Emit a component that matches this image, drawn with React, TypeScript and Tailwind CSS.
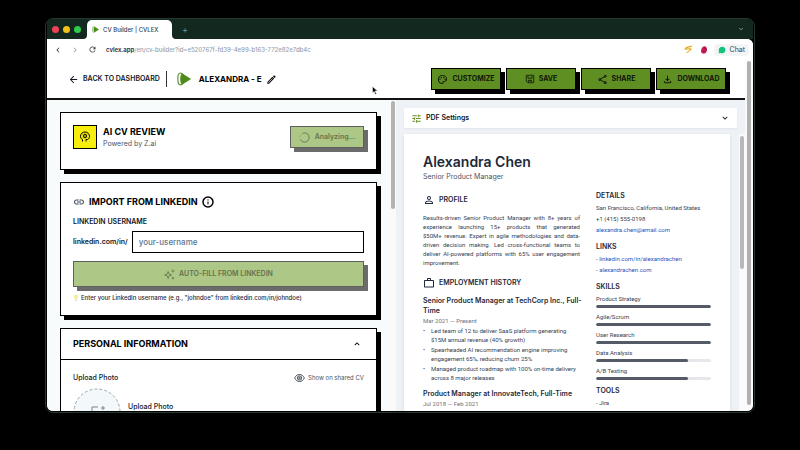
/**
 * CvBuilderView - CV editor shown inside a browser window
 * Left: form cards, right: live PDF preview
 */

import type { ReactNode } from 'react';
import {
    MdOutlinePalette,
    MdOutlineShare,
    MdOutlineFileDownload,
    MdLink,
    MdTune,
    MdPersonOutline,
    MdWorkOutline,
    MdOutlineEdit,
    MdArrowBack,
    MdKeyboardArrowDown,
    MdKeyboardArrowUp,
    MdRefresh,
    MdChevronLeft,
    MdChevronRight,
} from 'react-icons/md';

const SUMMARY_LINES = [
    'Results-driven Senior Product Manager with 8+ years of',
    'experience launching 15+ products that generated',
    '$50M+ revenue. Expert in agile methodologies and data-',
    'driven decision making. Led cross-functional teams to',
    'deliver AI-powered platforms with 65% user engagement',
    'improvement.',
];

const SKILLS = [
    { name: 'Product Strategy', level: 100 },
    { name: 'Agile/Scrum', level: 100 },
    { name: 'User Research', level: 100 },
    { name: 'Data Analysis', level: 80 },
    { name: 'A/B Testing', level: 80 },
];

const ACHIEVEMENTS = [
    'Led team of 12 to deliver SaaS platform generating $15M annual revenue (40% growth)',
    'Spearheaded AI recommendation engine improving engagement 65%, reducing churn 25%',
    'Managed product roadmap with 100% on-time delivery across 8 major releases',
];

/* ── Icons ──────────────────────────────────────────────────────────── */
const Logo = ({ className }: { className: string }) => (
    <svg viewBox="0 0 26 26" className={className} aria-hidden="true">
        <ellipse cx="6.5" cy="13" rx="5" ry="11" fill="#fff" stroke="#4f8a1c" strokeWidth="2" />
        <path d="M9 3 L25 13 L9 23 C6 18 6 8 9 3 Z" fill="#4f8a1c" stroke="#4f8a1c" strokeWidth="1.5" strokeLinejoin="round" />
    </svg>
);

const MindIcon = ({ className }: { className: string }) => (
    <svg viewBox="0 0 24 24" className={className} fill="none" stroke="currentColor" strokeWidth="2" aria-hidden="true">
        <path d="M7 21v-4C4 15.500 3 13 3 10.500a9 8.500 0 0 1 18 0c0 3-1 5-4 6.500h-3v4" />
        <circle cx="12" cy="10" r="3" />
        <path d="M12 5v2M12 13v2M7.500 7.500l2 1M16.500 7.500l-2 1M7.500 12.500l2-1M16.500 12.500l-2-1" strokeWidth="1.500" />
    </svg>
);

const SaveIcon = ({ className }: { className: string }) => (
    <svg viewBox="0 0 24 24" className={className} fill="none" stroke="currentColor" strokeWidth="2" aria-hidden="true">
        <path d="M4 3h16a1 1 0 0 1 1 1v16a1 1 0 0 1-1 1H7l-4-4V4a1 1 0 0 1 1-1z" />
        <path d="M7 4v6h10V4M8 20v-5h8v5" />
        <path d="M12 15v4" />
    </svg>
);

const SparkleIcon = ({ className }: { className: string }) => (
    <svg viewBox="0 0 24 24" className={className} fill="none" stroke="currentColor" strokeWidth="1.8" aria-hidden="true">
        <path d="M9 5.5 L11 11 L16.5 13 L11 15 L9 20.500 L7 15 L1.500 13 L7 11 Z" strokeLinejoin="round" />
        <path d="M19.500 1.500v6M16.500 4.500h6M19.500 17.500v5M17 20h5" />
    </svg>
);

const EyeIcon = ({ className }: { className: string }) => (
    <svg viewBox="0 0 24 18" className={className} fill="none" stroke="currentColor" strokeWidth="1.8" aria-hidden="true">
        <path d="M1 9C4 3.500 7.500 1 12 1s8 2.500 11 8c-3 5.500-6.500 8-11 8S4 14.500 1 9z" />
        <circle cx="12" cy="9" r="4.800" />
        <circle cx="12" cy="9" r="1.800" />
    </svg>
);

const BulbIcon = ({ className }: { className: string }) => (
    <svg viewBox="0 0 12 16" className={className} aria-hidden="true">
        <path d="M6 1a5 5 0 0 0-3 9v2h6v-2a5 5 0 0 0-3-9z" fill="#f3ee9c" />
        <path d="M4 13h4v2H4z" fill="#b9bcae" />
    </svg>
);

/* ── Shared pieces ──────────────────────────────────────────────────── */
const ActionButton = ({ icon, label }: { icon: ReactNode; label: string }) => (
    <button
        type="button"
        className="flex h-[22px] w-[70px] items-center justify-center gap-1 border border-black bg-[#5f8f22] text-[7px] font-bold text-[#10180a] shadow-[4px_4px_0_#000]"
    >
        {icon}
        {label}
    </button>
);

const Card = ({ children, className = '' }: { children: ReactNode; className?: string }) => (
    <section className={`shrink-0 border border-black bg-white shadow-[4px_4px_0_#000] ${className}`}>{children}</section>
);

const PaperHeading = ({ icon, children }: { icon: ReactNode; children: ReactNode }) => (
    <h3 className="flex items-center gap-1 font-['Inter',sans-serif] text-[7px] leading-3 font-semibold text-gray-800">
        {icon}
        {children}
    </h3>
);

const SideHeading = ({ children, className = '' }: { children: ReactNode; className?: string }) => (
    <h3 className={`font-['Inter',sans-serif] text-[7px] leading-[13px] font-semibold text-gray-800 ${className}`}>
        {children}
    </h3>
);

const JobTitle = ({ children }: { children: ReactNode }) => (
    <h4 className="mt-[7px] font-['Inter',sans-serif] text-[7px] leading-[10px] font-semibold text-gray-800">{children}</h4>
);

/* ── Browser chrome ─────────────────────────────────────────────────── */
const TabStrip = () => (
    <div className="flex h-5 shrink-0 items-end bg-[#13291f] pr-2">
        <div className="flex items-center gap-1 self-center pl-[5px]">
            <span className="size-[7px] rounded-full bg-[#ee4056]" />
            <span className="size-[7px] rounded-full bg-[#f2c218]" />
            <span className="size-[7px] rounded-full bg-[#2fcb4a]" />
        </div>
        <span className="ml-0.5 size-1 bg-white">
            <span className="block size-full rounded-br bg-[#13291f]" />
        </span>
        <div className="flex h-[19px] w-[85px] items-center gap-1 rounded-t-[5px] bg-white pl-[5px] text-[6px] font-medium text-gray-700">
            <Logo className="size-[7px]" />
            CV Builder | CVLEX
        </div>
        <span className="size-1 bg-white">
            <span className="block size-full rounded-bl bg-[#13291f]" />
        </span>
        <button type="button" aria-label="New tab" className="ml-1.5 self-center text-[9px] leading-none text-[#7e938a]">+</button>
        <MdKeyboardArrowDown className="ml-auto size-2 self-center text-[#8fa39a]" />
    </div>
);

const Toolbar = () => (
    <div className="flex h-[21px] shrink-0 items-center bg-white pr-1 pl-1.5 text-[#3d3d3d]">
        <button type="button" aria-label="Back"><MdChevronLeft className="block size-[10px]" /></button>
        <button type="button" aria-label="Forward" className="ml-[7px] text-gray-400"><MdChevronRight className="block size-[10px]" /></button>
        <button type="button" aria-label="Reload" className="ml-[8px]"><MdRefresh className="block size-[9px]" /></button>
        <p className="ml-[9px] text-[6px] font-medium text-gray-400">
            <span className="font-semibold text-gray-800">cvlex.app</span>/en/cv-builder?id=e520767f-fd39-4e99-b163-772e82e7db4c
        </p>
        <svg viewBox="0 0 24 24" className="ml-auto size-[9px]" fill="none" stroke="#e5ac22" strokeWidth="3" aria-hidden="true">
            <path d="M21 3 6 7l-3 4 16-1-4 5-8 6" strokeLinejoin="round" />
        </svg>
        <svg viewBox="0 0 24 24" className="ml-[7px] size-2" aria-hidden="true">
            <path d="M13 1c6 0 9 5 8 12-1 6-4 10-9 10S2 20 3 14 7 1 13 1z" fill="#c9205c" />
            <path d="M11 7c4-2 7 1 6 5M8 12c1 4 5 5 8 3" fill="none" stroke="#7c1238" strokeWidth="2" />
        </svg>
        <button type="button" className="ml-1.5 flex h-3 items-center gap-1 rounded-sm bg-gray-100 px-1 text-[7px] leading-3 text-gray-700">
            <svg viewBox="0 0 24 24" className="size-2" aria-hidden="true">
                <path d="M12 2a10 10 0 1 1-4 19l-6 1 1-6A10 10 0 0 1 12 2z" fill="#12c37d" />
            </svg>
            Chat
        </button>
    </div>
);

/* ── Page header ────────────────────────────────────────────────────── */
const PageHeader = () => (
    <header className="flex h-10 shrink-0 items-center justify-between border-b-2 border-[#111] bg-white pr-[19px] pl-[21px]">
        <div className="flex items-center">
            <a href="#dashboard" className="flex items-center gap-1 text-[7px] font-semibold text-gray-900">
                <MdArrowBack className="size-[11px]" />
                BACK TO DASHBOARD
            </a>
            <span className="mr-2.5 ml-1.5 h-4 w-px bg-[#333]" />
            <Logo className="size-[14px]" />
            <h1 className="ml-2 text-[8px] font-bold text-black">ALEXANDRA - E</h1>
            <button type="button" aria-label="Rename" className="ml-1"><MdOutlineEdit className="size-[11px]" /></button>
        </div>
        <div className="flex gap-[5px]">
            <ActionButton icon={<MdOutlinePalette className="size-[11px]" />} label="CUSTOMIZE" />
            <ActionButton icon={<SaveIcon className="size-[10px]" />} label="SAVE" />
            <ActionButton icon={<MdOutlineShare className="size-[11px]" />} label="SHARE" />
            <ActionButton icon={<MdOutlineFileDownload className="size-[11px]" />} label="DOWNLOAD" />
        </div>
    </header>
);

/* ── Form column ────────────────────────────────────────────────────── */
const ReviewCard = () => (
    <Card className="flex items-start justify-between px-3 pt-3 pb-5">
        <div className="flex gap-1.5">
            <span className="flex size-6 items-center justify-center border border-black bg-[#f7ee0c]">
                <MindIcon className="size-3" />
            </span>
            <div>
                <h2 className="text-[9px] leading-[14px] font-bold text-black">AI CV REVIEW</h2>
                <p className="text-[7px] leading-[10px] text-gray-600">Powered by Z.ai</p>
            </div>
        </div>
        <button
            type="button"
            disabled
            className="mt-px flex h-[22px] w-[74px] items-center justify-center gap-[5px] border border-[#5f5f5f] bg-[#adc786] text-[7px] font-semibold text-[#65734f] shadow-[4px_4px_0_#6b6b6b]"
        >
            <svg viewBox="0 0 24 24" className="size-[11px]" fill="none" stroke="currentColor" strokeWidth="2" aria-hidden="true">
                <path d="M8 3a10 10 0 1 1-5 13" />
                <path d="M2 12a10 10 0 0 1 6-9" opacity="0.25" />
            </svg>
            Analyzing...
        </button>
    </Card>
);

const LinkedInCard = () => (
    <Card className="px-3 pt-3 pb-[13px]">
        <h2 className="flex items-center gap-1 text-[9px] leading-[14px] font-bold text-black">
            <MdLink className="size-3 text-gray-700" />
            IMPORT FROM LINKEDIN
            <svg viewBox="0 0 24 24" className="size-3" fill="none" stroke="currentColor" strokeWidth="3" aria-hidden="true">
                <circle cx="12" cy="12" r="10" />
                <path d="M12 11v6M12 6.500v2.500" strokeWidth="2" />
            </svg>
        </h2>
        <label htmlFor="linkedin-username" className="mt-2 block text-[7px] leading-[10px] font-semibold text-gray-900">
            LINKEDIN USERNAME
        </label>
        <div className="mt-1 flex items-center gap-1">
            <span className="text-[7px] font-semibold text-gray-900">linkedin.com/in/</span>
            <input
                id="linkedin-username"
                type="text"
                placeholder="your-username"
                className="h-[22px] min-w-0 flex-1 border border-black px-1.5 text-[8px] font-medium placeholder:text-slate-500"
            />
        </div>
        <button
            type="button"
            disabled
            className="mt-2 flex h-[26px] w-full items-center justify-center gap-1 border border-[#5f5f5f] bg-[#adc786] text-[7px] font-semibold text-[#65734f] shadow-[4px_4px_0_#6b6b6b]"
        >
            <SparkleIcon className="size-[11px]" />
            AUTO-FILL FROM LINKEDIN
        </button>
        <p className="mt-1.5 flex items-center gap-[2px] text-[6px] leading-[9px] font-medium text-gray-800">
            <BulbIcon className="h-[7px] w-[6px]" />
            Enter your LinkedIn username (e.g., "johndoe" from linkedin.com/in/johndoe)
        </p>
    </Card>
);

const PersonalCard = () => (
    <Card>
        <div className="flex h-[31px] items-center justify-between border-b border-black pr-3.5 pl-3">
            <h2 className="text-[9px] font-bold text-black">PERSONAL INFORMATION</h2>
            <button type="button" aria-label="Collapse"><MdKeyboardArrowUp className="block size-[10px]" /></button>
        </div>
        <div className="px-3 pt-3">
            <div className="flex items-center justify-between text-[7px] leading-[12px]">
                <span className="font-medium text-gray-900">Upload Photo</span>
                <span className="flex items-center gap-[3px] text-[6px] text-gray-600">
                    <EyeIcon className="h-2 w-[11px] text-gray-800" />
                    Show on shared CV
                </span>
            </div>
            <div className="mt-1 flex gap-[7px]">
                <svg viewBox="0 0 48 48" className="size-12 shrink-0" fill="none" aria-hidden="true">
                    <circle cx="24" cy="24" r="23" fill="#f3f8fa" stroke="#9aa5ae" strokeDasharray="3 2" />
                    <path d="M25 19h-6v12h12v-6M28 20h4M30 18v4" stroke="#7b858d" />
                </svg>
                <p className="mt-[13px] text-[7px] leading-[12px] font-medium text-gray-900">Upload Photo</p>
            </div>
        </div>
    </Card>
);

/* ── Preview column ─────────────────────────────────────────────────── */
const Resume = () => (
    <article className="mr-[9px] min-h-0 flex-1 overflow-hidden bg-white px-[19px] pt-[18px] font-['Roboto',sans-serif] text-[6px] text-gray-700 shadow-sm">
        <h2 className="font-['Inter',sans-serif] text-[14px] leading-5 font-semibold text-gray-800">Alexandra Chen</h2>
        <p className="font-['Inter',sans-serif] text-[7px] leading-[10px] text-gray-600">Senior Product Manager</p>
        <div className="flex gap-3">
            <div className="min-w-0 flex-1 pt-3">
                <PaperHeading icon={<MdPersonOutline className="size-3" />}>PROFILE</PaperHeading>
                <p className="mt-[7px] pr-1 leading-[9px]">
                    {SUMMARY_LINES.map((line) => (
                        <span key={line} className="block [text-align-last:justify] last:[text-align-last:left]">{line} </span>
                    ))}
                </p>
                <div className="mt-[10px]">
                    <PaperHeading icon={<MdWorkOutline className="size-3" />}>EMPLOYMENT HISTORY</PaperHeading>
                </div>
                <JobTitle>Senior Product Manager at TechCorp Inc., Full-Time</JobTitle>
                <p className="leading-[9px] text-gray-500">Mar 2021 — Present</p>
                <ul className="mt-px space-y-[1px]">
                    {ACHIEVEMENTS.map((item) => (
                        <li key={item} className="flex pr-1 leading-[9px]">
                            <span className="w-2 shrink-0">•</span>
                            <span>{item}</span>
                        </li>
                    ))}
                </ul>
                <JobTitle>Product Manager at InnovateTech, Full-Time</JobTitle>
                <p className="leading-[9px] text-gray-500">Jul 2018 — Feb 2021</p>
            </div>
            <aside className="w-[115px] shrink-0 pt-[7px]">
                <SideHeading>DETAILS</SideHeading>
                <div className="leading-[11px]">
                    <p>San Francisco, California, United States</p>
                    <p>+1 (415) 555-0198</p>
                    <a href="#email" className="block text-[#1f55bd]">alexandra.chen@email.com</a>
                </div>
                <SideHeading className="mt-[5px]">LINKS</SideHeading>
                <ul className="leading-[11px]">
                    <li>- <a href="#linkedin" className="text-[#1f55bd]">linkedin.com/in/alexandrachen</a></li>
                    <li>- <a href="#site" className="text-[#1f55bd]">alexandrachen.com</a></li>
                </ul>
                <SideHeading className="mt-[5px]">SKILLS</SideHeading>
                <ul>
                    {SKILLS.map((skill) => (
                        <li key={skill.name} className="h-[18px]">
                            <p className="mb-px leading-[11px]">{skill.name}</p>
                            <div className="h-[3px] overflow-hidden rounded-full bg-gray-200">
                                <div className="h-full rounded-full bg-[#555b66]" style={{ width: `${skill.level}%` }} />
                            </div>
                        </li>
                    ))}
                </ul>
                <SideHeading className="mt-px">TOOLS</SideHeading>
                <ul className="leading-[11px]">
                    <li>- Jira</li>
                    <li>- Figma</li>
                </ul>
            </aside>
        </div>
    </article>
);

export default function App() {
    return (
        <div className="relative flex h-screen flex-col bg-black px-[45px] pt-[18px] pb-[37px] font-['Inter',sans-serif]">
            <div className="flex min-h-0 flex-1 flex-col overflow-hidden rounded-lg border border-[#24382f] bg-black px-px pb-px">
                <TabStrip />
                <div className="flex min-h-0 flex-1 flex-col overflow-hidden rounded-tr-md rounded-b-md bg-white">
                    <Toolbar />
                    <div className="flex min-h-0 flex-1">
                        <div className="flex min-w-0 flex-1 flex-col">
                            <PageHeader />
                            <main className="flex min-h-0 flex-1">
                                {/* Form */}
                                <div className="flex w-1/2 bg-[#f8fbfc]">
                                    <div className="flex min-w-0 flex-1 flex-col gap-3 overflow-hidden px-[13px] pt-3">
                                        <ReviewCard />
                                        <LinkedInCard />
                                        <PersonalCard />
                                    </div>
                                    <div className="w-1.5 shrink-0 bg-[#fafafa] px-px pt-px">
                                        <div className="h-[108px] rounded-full bg-[#b3b3b3]" />
                                    </div>
                                </div>
                                {/* Preview */}
                                <div className="flex w-1/2 flex-col gap-1.5 bg-[#eef2f7] pt-2 pl-2">
                                    <button type="button" className="mr-2 flex h-5 shrink-0 items-center gap-1 bg-white px-[7px] text-[7px] font-semibold text-gray-900 shadow-xs">
                                        <MdTune className="size-[11px] text-[#6b8e23]" />
                                        PDF Settings
                                        <MdKeyboardArrowDown className="ml-auto size-[10px]" />
                                    </button>
                                    <div className="flex min-h-0 flex-1">
                                        <Resume />
                                        <div className="w-1.5 shrink-0 bg-[#fafafa] px-px pt-0.5">
                                            <div className="h-[133px] rounded-full bg-[#b8b8b8]" />
                                        </div>
                                    </div>
                                </div>
                            </main>
                        </div>
                        <div className="w-2 shrink-0 bg-[#fafafa] px-0.5 pt-px pb-1.5">
                            <div className="h-full rounded-full bg-[#b0b0b0]" />
                        </div>
                    </div>
                </div>
            </div>
            {/* Mouse pointer */}
            <svg viewBox="0 0 12 18" className="absolute top-[86px] left-[372px] h-[9px] w-[6px]" aria-hidden="true">
                <path d="M1 1v13l3-3 3 6 2-1-3-6h5z" fill="#000" stroke="#fff" />
            </svg>
        </div>
    );
}
